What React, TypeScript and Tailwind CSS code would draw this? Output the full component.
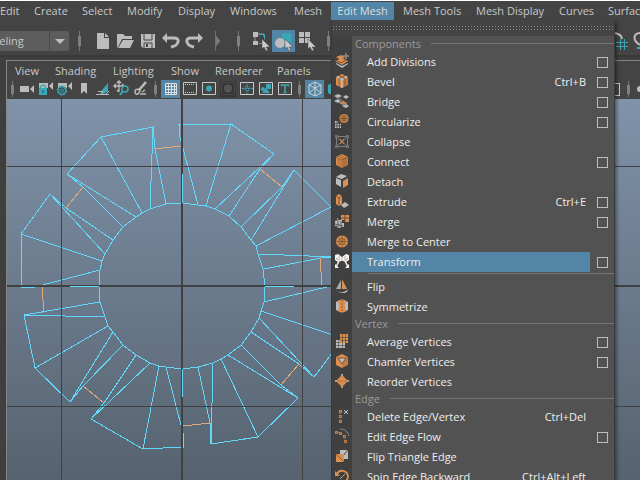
import React from "react";

const O = "#dc8f4e";
const G = "#bcbcbc";
const T = "#3ba7b4";
const D = "#444444";

type IconProps = { children: React.ReactNode; size?: number };

function Icon({ children, size = 20 }: IconProps) {
  return (
    <svg width={size} height={size} viewBox={`0 0 ${size} ${size}`} fill="none" className="block shrink-0" aria-hidden="true">
      {children}
    </svg>
  );
}

const cube = (
  <>
    <path d="M4 5l6-3 6 3-6 3z" fill={O} />
    <path d="M4 5v8l6 3V8z" fill={O} />
    <path d="M16 5v8l-6 3V8z" fill="#c97b3c" />
  </>
);

const circleMesh = (x: number, y: number, r: number) => (
  <>
    <circle cx={x} cy={y} r={r} fill={O} />
    <path
      d={`M${x - r} ${y}h${2 * r}M${x} ${y - r}v${2 * r}M${x - r * 0.7} ${y - r * 0.7}l${1.4 * r} ${1.4 * r}M${x + r * 0.7} ${y - r * 0.7}l${-1.4 * r} ${1.4 * r}`}
      stroke="#7a5534"
      strokeWidth="0.8"
    />
    <circle cx={x} cy={y} r={r * 0.55} stroke="#7a5534" strokeWidth="0.8" />
  </>
);

const menuIcons: Record<string, React.ReactNode> = {
  add: (
    <>
      <path d="M4 11l6 3 6-3v1l-6 4-6-4z" fill={G} />
      <path d="M3 9l7-3 6 3-6 4z" fill={O} />
      <path d="M4 5l5-2 4 2-4 3z" fill={O} />
      <path d="M4 8l5 3 5-3" stroke="#5b4432" strokeWidth="0.8" />
      <path d="M14 1v6M11 4h6" stroke="#8c8c8c" strokeWidth="1.500" />
    </>
  ),
  bevel: (
    <>
      {cube}
      <path d="M5 4.500l5 3 5-3M10 8v8" stroke={G} strokeWidth="1.600" />
      <path d="M7 3.500l6 3v8M13 3.500l-6 3v8" stroke="#6b4a30" strokeWidth="0.700" />
    </>
  ),
  bridge: (
    <>
      <path d="M2 4l4-2 4 2-4 2zM11 5l3-2 3 2-3 2zM2 9l4-2 3 2-3 2zM10 14l4-2 3 2-3 2z" fill={G} />
      <path d="M7 11l4-2 4 2-4 2z" fill={O} />
      <path d="M6 5l9 7M4 5l10 9" stroke="#898989" strokeWidth="0.8" />
    </>
  ),
  circularize: (
    <>
      {circleMesh(12, 6.5, 4.5)}
      <path d="M3 9h3v2h3v5H3z" fill={G} />
      <path d="M3 11.500h6M3 13.800h6M5 9v7M7.500 9v7" stroke={D} strokeWidth="0.8" />
    </>
  ),
  collapse: (
    <>
      <path d="M4.500 4.500h11v10h-11zM4 4l12 11M16 4L4 15" stroke="#7f7f7f" strokeWidth="1" />
      <path d="M3 3h3v3H3zM14 3h3v3h-3zM3 13h3v3H3zM14 13h3v3h-3z" fill="#707070" />
      <path d="M8 7l4 5M12 7l-4 5" stroke={O} strokeWidth="1" />
    </>
  ),
  connect: (
    <>
      {cube}
      <path d="M4 5l6 3 6-3M10 8v8M6 6v8M8 7v8M12 7v8M14 6v8M6 4l6 3M8 3l6 3" stroke="#8a5c35" strokeWidth="0.7" />
    </>
  ),
  detach: (
    <>
      <path d="M4 5l5-3 6 2-5 3zM4 6l5 2v7l-5-3z" fill={G} />
      <path d="M11 9l5-3v7l-5 3z" fill={O} />
    </>
  ),
  extrude: (
    <>
      <path d="M9 13l4-3 4 3-5 3z" fill={G} />
      <path d="M4 4l3-2 3 2v8l-3 2-3-2z" fill={O} />
      <path d="M7 6v7M4 4l3 2 3-2" stroke="#6b4a30" strokeWidth="0.8" />
    </>
  ),
  merge: (
    <>
      <path d="M9 3h8v7h-4V8H9z" fill={O} />
      <path d="M3 9l3-1h4v3h2v4H9v1H5v-2H3z" fill={G} />
      <path d="M13 3v6M9 6h8M3 12l8 2M6 8v8M9 9v7" stroke={D} strokeWidth="0.8" />
      <path d="M5 6l2 3" stroke={O} />
    </>
  ),
  center: circleMesh(10, 9.5, 6),
  transform: (
    <>
      <path d="M3 3l3-1 4 3 4-3 3 1v5l-3 2-3-1h-2l-3 1-3-2z" fill="#f4f4f4" />
      <path d="M7 4v5M13 4v5M10 5v4" stroke="#a9a9a9" strokeWidth="0.8" />
      <path d="M4 6l2 2M16 6l-2 2" stroke={O} />
      <path d="M7 9l-3 6M13 9l3 6" stroke="#f4f4f4" strokeWidth="1.500" />
      <path d="M3 12v4h4zM17 12v4h-4z" fill="#f4f4f4" />
    </>
  ),
  flip: (
    <>
      <path d="M9 3v9H4z" fill="#aaa" />
      <path d="M10 2v10h5z" fill={O} />
      <path d="M4 13c3 3 9 3 12-1l-1 3c-3 2-8 1-11-2" fill={G} />
    </>
  ),
  symmetrize: (
    <>
      <path d="M4 5l4-2v12l-4-2z" fill={G} />
      <path d="M16 5l-4-2v12l4-2z" fill={G} />
      <path d="M6 4c3-2 5-2 8 0l-1 5 1 5c-3 2-5 2-8 0l1-5z" fill={O} />
      <path d="M10 3v12" stroke="#8a5c35" strokeDasharray="2 1" />
    </>
  ),
  average: (
    <>
      <path d="M4 8h9v8H4z" fill={G} />
      <path d="M8 2h8v9H8z" fill={O} />
      <path d="M4 10.500h4M4 13.500h9M6.500 8v8M10.500 2v14M13.500 2v9M8 5.500h8M8 8.500h8" stroke={D} strokeWidth="0.6" />
    </>
  ),
  chamfer: (
    <>
      {cube}
      <path d="M6 6h8l-4 6z" fill={G} stroke="#5b4432" strokeWidth="0.8" />
    </>
  ),
  reorder: (
    <>
      <path d="M10 2v14M3 9h14" stroke="#a6a6a6" strokeWidth="2" />
      <path d="M10 3l6 6-6 6-6-6z" fill={O} />
      <path d="M5 9h10" stroke="#a7683a" strokeWidth="0.8" />
    </>
  ),
  deleteEdge: (
    <>
      <path d="M8 4v11" stroke="#8b7969" strokeDasharray="1 1" />
      <path d="M7.500 3.500h2v2h-2zM7.500 8.500h2v2h-2zM7.500 13.500h2v2h-2z" stroke={O} strokeWidth="0.9" />
      <path d="M12 3l4 4M16 3l-4 4" stroke="#c7c7c7" />
    </>
  ),
  flow: (
    <>
      <path d="M8 2c5 0 8 3 9 7" stroke="#888" />
      <path d="M4 5c5 0 9 3 9 9" stroke="#8b7969" strokeDasharray="1 1" />
      <path d="M3.500 4.500h2v2h-2zM7.500 5.500h2v2h-2zM11.500 8.500h2v2h-2zM12.500 13.500h2v2h-2z" stroke={O} strokeWidth="0.9" />
    </>
  ),
  triangle: (
    <>
      <path d="M8 3h8v9H8z" fill={G} />
      <path d="M10 10l6-7" stroke={D} />
      <path d="M4 7h8v8H4z" fill={O} />
      <path d="M4 7l8 8" stroke="#8a5c35" />
    </>
  ),
  spin: (
    <>
      <path d="M5 7c2-5 10-4 11 2 0 4-3 7-7 7" stroke={O} strokeWidth="1.800" />
      <path d="M3 4v5h5z" fill={O} />
      <path d="M8 12l5-5" stroke="#a6a6a6" />
    </>
  ),
};

type Entry =
  | { kind: "header"; label: string }
  | { kind: "line" }
  | { kind: "item"; label: string; icon: string; keys?: string; box?: boolean; active?: boolean };

const entries: Entry[] = [
  { kind: "header", label: "Components" },
  { kind: "item", label: "Add Divisions", icon: "add", box: true },
  { kind: "item", label: "Bevel", icon: "bevel", keys: "Ctrl+B", box: true },
  { kind: "item", label: "Bridge", icon: "bridge", box: true },
  { kind: "item", label: "Circularize", icon: "circularize", box: true },
  { kind: "item", label: "Collapse", icon: "collapse" },
  { kind: "item", label: "Connect", icon: "connect", box: true },
  { kind: "item", label: "Detach", icon: "detach" },
  { kind: "item", label: "Extrude", icon: "extrude", keys: "Ctrl+E", box: true },
  { kind: "item", label: "Merge", icon: "merge", box: true },
  { kind: "item", label: "Merge to Center", icon: "center" },
  { kind: "item", label: "Transform", icon: "transform", box: true, active: true },
  { kind: "line" },
  { kind: "item", label: "Flip", icon: "flip" },
  { kind: "item", label: "Symmetrize", icon: "symmetrize" },
  { kind: "header", label: "Vertex" },
  { kind: "item", label: "Average Vertices", icon: "average", box: true },
  { kind: "item", label: "Chamfer Vertices", icon: "chamfer", box: true },
  { kind: "item", label: "Reorder Vertices", icon: "reorder" },
  { kind: "header", label: "Edge" },
  { kind: "item", label: "Delete Edge/Vertex", icon: "deleteEdge", keys: "Ctrl+Del" },
  { kind: "item", label: "Edit Edge Flow", icon: "flow", box: true },
  { kind: "item", label: "Flip Triangle Edge", icon: "triangle" },
  { kind: "item", label: "Spin Edge Backward", icon: "spin", keys: "Ctrl+Alt+Left" },
];

function MenuEntry({ entry }: { entry: Entry }) {
  if (entry.kind === "header") {
    return (
      <div className="flex h-[15px] items-center pb-[2px] pl-[23px] text-[#9a9a9a]">
        <span className="mr-[10px]">{entry.label}</span>
        <span className="h-px flex-1 bg-[#737373]" />
      </div>
    );
  }
  if (entry.kind === "line") {
    return (
      <div className="h-[5px] pt-px pl-9">
        <div className="h-px bg-[#737373]" />
      </div>
    );
  }
  return (
    <div className="flex h-5 items-center">
      <Icon>{menuIcons[entry.icon]}</Icon>
      <button
        className={`flex h-5 flex-1 items-center justify-between pl-[15px] text-[#eeeeee] ${entry.active ? "bg-[#5285a6]" : ""}`}
      >
        <span>{entry.label}</span>
        {entry.keys && <span className="pr-1">{entry.keys}</span>}
      </button>
      <span className="flex w-6 shrink-0 pl-[7px]">
        {entry.box && <button aria-label={`${entry.label} options`} className="size-[11px] border border-[#bdbdbd]" />}
      </span>
    </div>
  );
}

function EditMeshMenu() {
  return (
    <div className="absolute top-full left-0 z-10 w-[284px] border-x border-[#393939] bg-[linear-gradient(90deg,#404040_20px,#525252_20px)] shadow-[2px_2px_3px_#00000060]">
      <div className="flex h-[16px] flex-col justify-center gap-[2px] bg-[#444444] pl-px">
        <div className="h-px bg-[repeating-linear-gradient(90deg,#8a8a8a_0_1px,transparent_1px_3px)]" />
        <div className="h-px bg-[repeating-linear-gradient(90deg,#8a8a8a_0_1px,transparent_1px_3px)]" />
      </div>
      <div className="pt-px">
        {entries.map((e, i) => (
          <MenuEntry key={i} entry={e} />
        ))}
      </div>
    </div>
  );
}

function Tool({ label, active, small, children }: { label: string; active?: boolean; small?: boolean; children: React.ReactNode }) {
  return (
    <button
      aria-label={label}
      className={`flex shrink-0 items-center justify-center ${small ? "h-[18px] w-[19px]" : "h-[22px] w-[23px]"} ${active ? "bg-[#5285a6]" : ""}`}
    >
      <Icon size={small ? 18 : 20}>{children}</Icon>
    </button>
  );
}

function Grip({ small }: { small?: boolean }) {
  return (
    <span className={`relative flex shrink-0 items-center justify-center ${small ? "h-[18px] w-[11px]" : "h-5 w-[21px]"}`}>
      <span className={`w-px bg-[#777777] ${small ? "h-4" : "h-5"}`} />
      <span className={`absolute w-[3px] bg-[#808080] ${small ? "h-[9px]" : "h-[10px]"}`} />
    </span>
  );
}

const cursor = <path d="M11 8l8 8h-4l2 3-2 1-2-4-2 2z" fill="#c9c9c9" stroke={D} strokeWidth="0.5" />;

function MainToolbar() {
  return (
    <div className="flex h-[37px] shrink-0 items-center border-b-2 border-[#393939] pt-[7px]">
      <label className="relative flex shrink-0">
        <select aria-label="Menu set" className="-ml-7 h-5 w-[97px] appearance-none rounded-xs bg-[#5d5d5d] pl-1 text-[#c8c8c8]">
          <option>Modeling</option>
        </select>
        <span className="pointer-events-none absolute inset-y-0 right-0 flex w-5 items-center justify-center border-l border-[#4b4b4b]">
          <svg width="10" height="5" viewBox="0 0 10 5" aria-hidden="true">
            <path d="M0 0h10L5 5z" fill="#c0c0c0" />
          </svg>
        </span>
      </label>
      <Grip />
      <Tool label="New scene">
        <path d="M5 2h7v5h5v11H5z" fill={G} />
        <path d="M13 2l4 4h-4z" fill={G} />
      </Tool>
      <Tool label="Open scene">
        <path d="M2 3h6l2 2h7v3H7l-3 6-2 3z" fill={G} />
        <path d="M8 9h11l-4 8H3z" fill={G} />
      </Tool>
      <Tool label="Save scene">
        <path d="M3 3h14v14H5l-2-2z" fill={G} />
        <path d="M6 3v6h8V3M6 17v-5h8v5" stroke={D} strokeWidth="1" />
        <path d="M8 13h2v3H8z" fill={D} />
      </Tool>
      <Tool label="Undo">
        <path d="M5 7h8q5 0 4 4t-7 5" stroke={G} strokeWidth="3" />
        <path d="M1 7l5-5v10z" fill={G} />
      </Tool>
      <Tool label="Redo">
        <path d="M15 7H7q-5 0-4 4t7 5" stroke={G} strokeWidth="3" />
        <path d="M19 7l-5-5v10z" fill={G} />
      </Tool>
      <Tool label="Expand tools">
        <path d="M8.500 0v20M9 5l4 5-4 5z" fill="#808080" stroke="#707070" />
      </Tool>
      <Grip />
      <Tool label="Select by hierarchy">
        <path d="M2 1h5v5H2zM2 10h5v4H2z" fill={G} />
        <path d="M4 6v4M7 3h6v3" stroke="#999" />
        <path d="M8 3.500h5.500v5M8 12.500h3" stroke={T} />
        {cursor}
      </Tool>
      <Tool label="Select by object" active>
        <path d="M8 2h9v9H8z" fill={T} />
        <circle cx="6" cy="12" r="5" fill={G} />
        {cursor}
      </Tool>
      <Tool label="Select by component">
        <path d="M2 1h5v5H2zM8 1h5v5H8zM2 7h5v5H2zM8 7h5v5H8z" fill={G} />
        {cursor}
      </Tool>
      <Grip />
      <div className="ml-auto flex w-8 shrink-0 overflow-hidden">
        <Tool label="Snap to grids">
          <path d="M3 2c6 0 9 3 9 6" stroke={G} strokeWidth="2" />
          <path d="M6 11.500h12M6 15.500h12M10.500 8v11M14.500 8v11" stroke={T} strokeWidth="1" />
        </Tool>
        <Tool label="Snap to curves">
          <path d="M8 2C0 2-1 9 7 14" stroke={G} strokeWidth="2" />
          <path d="M4 17h6" stroke={T} strokeWidth="2" />
        </Tool>
      </div>
    </div>
  );
}

const camera = <path d="M2 6h9v6H2zM12 9l4-4v8z" fill={G} />;
const cameraTop = <path d="M2 3h9v5H2zM12 6l4-4v8z" fill={G} />;
const frame = <path d="M2.500 2.500h13v12h-13z" stroke="#c9c9c9" />;

function PanelToolbar() {
  return (
    <div className="flex h-[19px] shrink-0 items-start">
      <span className="w-[10px] shrink-0 pr-px">
        <Grip small />
      </span>
      <Tool small label="Select camera">{camera}</Tool>
      <Tool small label="Lock camera">
        {cameraTop}
        <path d="M2 8h8v7H2z" fill={T} />
        <path d="M3.500 9V7q2.500-4 5 0v2" stroke={T} strokeWidth="1.500" />
        <path d="M6 10v3" stroke="#286f77" strokeWidth="1.500" />
      </Tool>
      <Tool small label="Camera attributes">
        {cameraTop}
        <circle cx="6" cy="10.500" r="4" fill={D} stroke={T} strokeWidth="2" strokeDasharray="2.500 0.500" />
        <circle cx="6" cy="10.500" r="1.500" stroke={T} />
      </Tool>
      <Tool small label="Bookmarks">
        <path d="M6 3h6v11l-3-3-3 3z" fill={G} />
      </Tool>
      <Tool small label="Image plane">
        <path d="M8 10l6-7v8l-6 4z" fill={T} />
        <path d="M2 14.500h13M4 11.500h4M6 15l3-4M11 15l4-4" stroke={G} />
      </Tool>
      <Tool small label="Pan and zoom">
        <path d="M6 1v11M1 6h10M4 3l2-2 2 2M3 4L1 6l2 2M4 10l2 2M9 4l2 2" stroke={G} strokeWidth="1.300" />
        <circle cx="12" cy="9" r="3" stroke={T} strokeWidth="1.500" />
        <path d="M10 11l-3 4" stroke={T} strokeWidth="2" />
      </Tool>
      <Tool small label="Grease pencil">
        <path d="M14 2l-7 8" stroke={G} strokeWidth="2.500" />
        <path d="M3 10l3-1 2 2-2 3c-2 1-3 0-3-4M8 14h6M10 12l3-2" stroke={G} strokeWidth="1.500" />
      </Tool>
      <Grip small />
      <Tool small label="Grid" active>
        <path d="M3.500 3.500h11v11h-11zM6.500 3.500v11M9.500 3.500v11M12.500 3.500v11M3.500 6.500h11M3.500 9.500h11M3.500 12.500h11" stroke="#dedede" />
      </Tool>
      <Tool small label="Film gate">
        {frame}
        <path d="M4 4.500h10M4 12.500h10" stroke="#c9c9c9" strokeDasharray="1 1" />
      </Tool>
      <Tool small label="Resolution gate">
        {frame}
        <circle cx="9" cy="8.500" r="3" fill={T} />
      </Tool>
      <Tool small label="Gate mask">
        <path d="M1 1h16v16H1z" fill="#363636" />
        <path d="M2.500 2.500h13v12h-13z" stroke="#4b4b4b" />
        <circle cx="9" cy="8.500" r="4" fill="#555555" />
      </Tool>
      <Tool small label="Field chart">
        {frame}
        <path d="M4 8.500h11M9 4v10" stroke={T} strokeDasharray="2 1" />
        <path d="M7 6.500h4v4H7z" stroke={T} strokeDasharray="1 1" />
      </Tool>
      <Tool small label="Safe action">
        {frame}
        <path d="M9 4h5v5H9z" fill={T} />
        <path d="M5 13l4-5 4 5z" fill={T} />
        <circle cx="6" cy="9" r="2" fill={T} />
      </Tool>
      <Tool small label="Safe title">
        {frame}
        <path d="M5.500 6.500V5h7v1.500M9 5v7.500M7.500 12.500h3" stroke={T} strokeWidth="1.500" />
      </Tool>
      <Grip small />
      <Tool small label="Wireframe" active>
        <path d="M9 2l6 3v8l-6 3-6-3V5zM3 5l6 3 6-3M9 8v8M9 2v6M3 13l6-5 6 5" stroke="#d4d4d4" />
      </Tool>
      <Tool small label="Smooth shade">
        <path d="M9 2l6 3v8l-6 3-6-3V5z" fill={T} />
      </Tool>
      <div className="ml-auto flex w-[26px] shrink-0 items-center overflow-hidden">
        <span className="h-[13px] w-[6px] shrink-0 overflow-hidden border border-l-0 border-[#c9c9c9]" />
        <span className="ml-[3px] flex">
          <Grip small />
        </span>
        <Tool small label="Isolate select">
          <circle cx="5" cy="9" r="3" fill={G} />
        </Tool>
      </div>
    </div>
  );
}

const meshPath = [
  "M99 286L100 270 102 261 105 254 113 240 123 227 136 217 142 213 150 209 166 204 182 203 198 205 206 206 215 209 229 216 241 227 251 240 256 246 258 254 263 269 265 286 264 302 261 311 259 318 251 332 241 345 228 355 221 359 213 363 198 367 182 369 166 367 159 366 150 363 136 355 123 345 113 332 108 326 105 317 100 302z",
  "M150 209L153 127 101 137 67 174 136 217M153 127L155 149 166 204M101 137L142 213M67 174L83 187 123 227",
  "M113 240L66 208 50 194 21 234 21 288 35 287 100 270M50 194L62 207 105 254M21 234L102 261",
  "M198 205L180 137 179 125 231 124 274 154 215 209M231 124L206 206M274 154L260 169 229 216",
  "M241 227L282 187 294 170 331 207 256 246M294 170L251 240M258 254L360 258M264 269L321 258 360 255",
  "M105 317L24 315 100 302M24 315L35 368 70 402 113 332M35 368L108 326M70 402L83 386 123 345",
  "M136 355L104 403 91 419 143 449 184 447 183 433 166 367M91 419L150 363M143 449L159 366",
  "M198 367L210 423 211 444 213 363M211 444L258 437 298 398 228 355M258 437L221 359M298 398L281 385 241 345",
  "M251 332L299 364 314 377 336 348M314 377L259 318M336 336L261 311M264 302L331 286",
].join("");

function Viewport() {
  return (
    <div className="min-h-0 flex-1 overflow-hidden bg-[linear-gradient(#8093aa,#56626f)]">
      <svg width="100%" height="100%" fill="none" shapeRendering="crispEdges" role="img" aria-label="Gear mesh in top view">
        <g transform="translate(-7 -99)">
          <path d={meshPath} stroke="#62d8fb" strokeWidth="1" />
          <path d="M61.500 99V4000M302.500 99V4000M7 166.500H4000M7 406.500H4000" stroke="#414141" />
          <path d="M182 99V4000M7 286H4000" stroke="#414141" strokeWidth="2" />
          <path d="M70 286.500H99M265 286.500H294M182.500 174V203M182.500 369V397" stroke="#62d8fb" />
          <path
            d="M154 149L181 146M83 187L66 208M260 169L282 187M320 258L322 285M42 287L44 313M83 386L104 403M183 426L210 423M281 385L299 364"
            stroke="#e3a878"
          />
        </g>
      </svg>
    </div>
  );
}

const before = [
  ["Edit", "w-[27px] pl-0"],
  ["Create", "w-[48px] pl-[7px]"],
  ["Select", "w-[46px] pl-[7px]"],
  ["Modify", "w-[51px] pl-[6px]"],
  ["Display", "w-[52px] pl-[6px]"],
  ["Windows", "w-[63px] pl-[6px]"],
  ["Mesh", "w-[44px] pl-[7px]"],
];
const after = [
  ["Mesh Tools", "w-[73px]"],
  ["Mesh Display", "w-[83px]"],
  ["Curves", "w-[49px]"],
  ["Surfaces", "w-[60px]"],
];
const panelMenus = [
  ["View", "w-10"],
  ["Shading", "w-[58px]"],
  ["Lighting", "w-[58px]"],
  ["Show", "w-11"],
  ["Renderer", "w-[62px]"],
  ["Panels", "w-12"],
];

export default function App() {
  return (
    <div className="flex h-screen flex-col overflow-hidden border-t border-white bg-[#444444] font-['Open_Sans','Noto_Sans',sans-serif] text-[11px] leading-[14px] whitespace-nowrap text-[#c8c8c8]">
      <nav className="flex h-[19px] shrink-0 items-end">
        {before.map(([label, box]) => (
          <button key={label} className={`h-[18px] shrink-0 text-left ${box}`}>
            {label}
          </button>
        ))}
        <div className="relative mr-[9px] flex shrink-0">
          <button className="h-[18px] w-[63px] bg-[#5285a6] text-[#dddddd]" aria-expanded="true">
            Edit Mesh
          </button>
          <EditMeshMenu />
        </div>
        {after.map(([label, box]) => (
          <button key={label} className={`h-[18px] shrink-0 text-left ${box}`}>
            {label}
          </button>
        ))}
      </nav>
      <MainToolbar />
      <div className="flex min-h-0 flex-1 bg-[#3f3f3f] pt-[3px] pl-[6px]">
        <main className="flex min-w-0 flex-1 flex-col border-t border-l border-[#858585] bg-[#444444]">
          <div className="flex h-[19px] shrink-0 items-center pl-2">
            {panelMenus.map(([label, box]) => (
              <button key={label} className={`shrink-0 text-left ${box}`}>
                {label}
              </button>
            ))}
          </div>
          <PanelToolbar />
          <Viewport />
        </main>
      </div>
    </div>
  );
}
